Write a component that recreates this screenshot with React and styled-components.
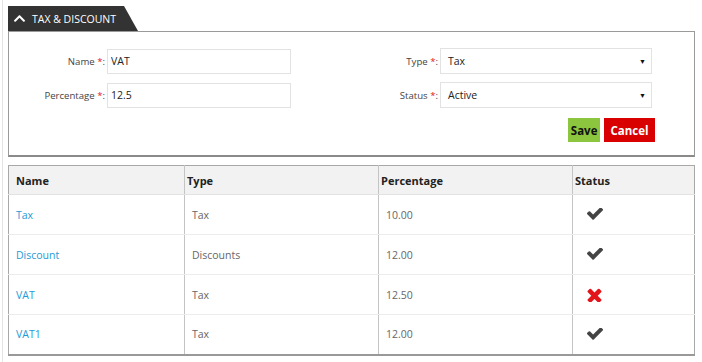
import styled, { createGlobalStyle } from "styled-components";
import { FaChevronUp } from "react-icons/fa";

const GlobalStyle = createGlobalStyle`
  body {
    margin: 0;
    background: #fff;
    font-family: "Open Sans", "Liberation Sans", sans-serif;
    font-size: 10.5px;
    color: #444;
  }
`;

const rows = [
  { name: "Tax", type: "Tax", pct: "10.00", active: true },
  { name: "Discount", type: "Discounts", pct: "12.00", active: true },
  { name: "VAT", type: "Tax", pct: "12.50", active: false },
  { name: "VAT1", type: "Tax", pct: "12.00", active: true },
];

// heavy check / cross, same shapes as the old icon font
const CheckIcon = () => (
  <svg width="16" height="13" viewBox="121 420 1550 1200" fill="#444">
    <path d="M1671 566q0 40-28 68l-724 724-136 136q-28 28-68 28t-68-28l-136-136-362-362q-28-28-28-68t28-68l136-136q28-28 68-28t68 28l294 295 656-657q28-28 68-28t68 28l136 136q28 28 28 68z" />
  </svg>
);

const CrossIcon = () => (
  <svg width="15" height="14" viewBox="302 300 1188 1190" fill="#e3151a">
    <path d="M1490 1322q0 40-28 68l-136 136q-28 28-68 28t-68-28l-294-294-294 294q-28 28-68 28t-68-28l-136-136q-28-28-28-68t28-68l294-294-294-294q-28-28-28-68t28-68l136-136q28-28 68-28t68 28l294 294 294-294q28-28 68-28t68 28l136 136q28 28 28 68t-28 68l-294 294 294 294q28 28 28 68z" />
  </svg>
);

const App = () => {
  return (
    <Page>
      <GlobalStyle />
      <Tab>
        <FaChevronUp size={13} />
        <span>TAX &amp; DISCOUNT</span>
      </Tab>
      <Panel>
        <FormGrid>
          <Field>
            <Label $width={98}>
              Name <Star>*</Star>:
            </Label>
            <Input $width={184} defaultValue="VAT" />
          </Field>
          <Field>
            <Label $width={87}>
              Type <Star>*</Star>:
            </Label>
            <Select $width={212}>
              <span>Tax</span>
              <Caret>▼</Caret>
            </Select>
          </Field>
          <Field>
            <Label $width={98}>
              Percentage <Star>*</Star>:
            </Label>
            <Input $width={184} defaultValue="12.5" />
          </Field>
          <Field>
            <Label $width={87}>
              Status <Star>*</Star>:
            </Label>
            <Select $width={212}>
              <span>Active</span>
              <Caret>▼</Caret>
            </Select>
          </Field>
        </FormGrid>
        <Actions>
          <Button $bg="#8cc63e" $color="#111" $pad={2.5}>
            Save
          </Button>
          <Button $bg="#d80000" $color="#fff" $pad={6.5}>
            Cancel
          </Button>
        </Actions>
      </Panel>

      <Table>
        <colgroup>
          <Col $width={176} />
          <Col $width={194} />
          <Col $width={194} />
          <Col />
        </colgroup>
        <thead>
          <tr>
            <Th>Name</Th>
            <Th>Type</Th>
            <Th>Percentage</Th>
            <Th>Status</Th>
          </tr>
        </thead>
        <tbody>
          {rows.map((r) => (
            <tr key={r.name}>
              <NameCell>{r.name}</NameCell>
              <Td>{r.type}</Td>
              <Td>{r.pct}</Td>
              <StatusCell>{r.active ? <CheckIcon /> : <CrossIcon />}</StatusCell>
            </tr>
          ))}
        </tbody>
      </Table>
    </Page>
  );
};

export default App;

const Page = styled.div`
  margin-left: 2px;
  padding: 6px 0 8px 5px;
  border-left: 1px solid #e4e4e4;
  width: 687px;
`;

const Tab = styled.div`
  display: flex;
  align-items: center;
  gap: 6px;
  box-sizing: border-box;
  width: 130px;
  height: 25px;
  padding: 0 0 0 5px;
  background: #333;
  color: #fff;
  font-size: 10.5px;
  white-space: nowrap;
  clip-path: polygon(0 0, 116px 0, 100% 100%, 0 100%);
`;

const Panel = styled.div`
  border: 1px solid #9a9a9a;
  border-bottom: 2px solid #8a8a8a;
  height: 126px;
  box-sizing: border-box;
  padding-top: 16px;
`;

const FormGrid = styled.div`
  display: grid;
  grid-template-columns: 344px 1fr;
  row-gap: 8px;
`;

const Field = styled.div`
  display: flex;
  align-items: center;
`;

const Label = styled.label`
  width: ${(p) => p.$width}px;
  box-sizing: border-box;
  text-align: right;
  padding-right: 2px;
  color: #444;
  font-size: 9.6px;
`;

const Star = styled.span`
  color: #e02020;
`;

const Input = styled.input`
  width: ${(p) => p.$width}px;
  height: 25px;
  box-sizing: border-box;
  border: 1px solid #e2e2e2;
  padding: 0 3px;
  font-family: inherit;
  font-size: 10.5px;
  color: #222;
  outline: none;
`;

const Select = styled.div`
  width: ${(p) => p.$width}px;
  height: 26px;
  box-sizing: border-box;
  border: 1px solid #e2e2e2;
  padding: 0 5px 0 7px;
  display: flex;
  align-items: center;
  justify-content: space-between;
  color: #222;
`;

const Caret = styled.span`
  font-size: 7px;
  color: #111;
`;

const Actions = styled.div`
  display: flex;
  justify-content: flex-end;
  gap: 4px;
  padding-right: 39px;
  margin-top: 10px;
`;

const Button = styled.button`
  height: 24px;
  border: none;
  padding: 0 ${(p) => p.$pad}px;
  background: ${(p) => p.$bg};
  color: ${(p) => p.$color};
  font-family: inherit;
  font-weight: 700;
  font-size: 11.5px;
  cursor: pointer;
`;

const Table = styled.table`
  margin-top: 8px;
  width: 100%;
  border-collapse: collapse;
  border: 1px solid #a8a8a8;
  border-bottom: 2px solid #999;
  table-layout: fixed;
`;

const Col = styled.col`
  width: ${(p) => (p.$width ? `${p.$width}px` : "auto")};
`;

const Th = styled.th`
  height: 29px;
  box-sizing: border-box;
  background: #f2f2f2;
  text-align: left;
  padding: 0 0 0 2px;
  font-size: 11px;
  font-weight: 700;
  color: #222;
  border-left: 1px solid #c4c4c4;
  border-bottom: 1px solid #e2e2e2;

  &:first-child {
    padding-left: 7px;
    border-left: none;
  }
`;

const Td = styled.td`
  height: 40px;
  box-sizing: border-box;
  padding: 0 0 0 7px;
  color: #666;
  font-size: 10.5px;
  border-left: 1px solid #c4c4c4;
  border-bottom: 1px solid #ececec;

  tr:last-child > & {
    border-bottom: none;
  }
`;

const NameCell = styled(Td)`
  color: #1e9ad6;
  padding-left: 7px;
  border-left: none;
`;

const StatusCell = styled(Td)`
  padding-left: 14px;
  line-height: 0;
`;
